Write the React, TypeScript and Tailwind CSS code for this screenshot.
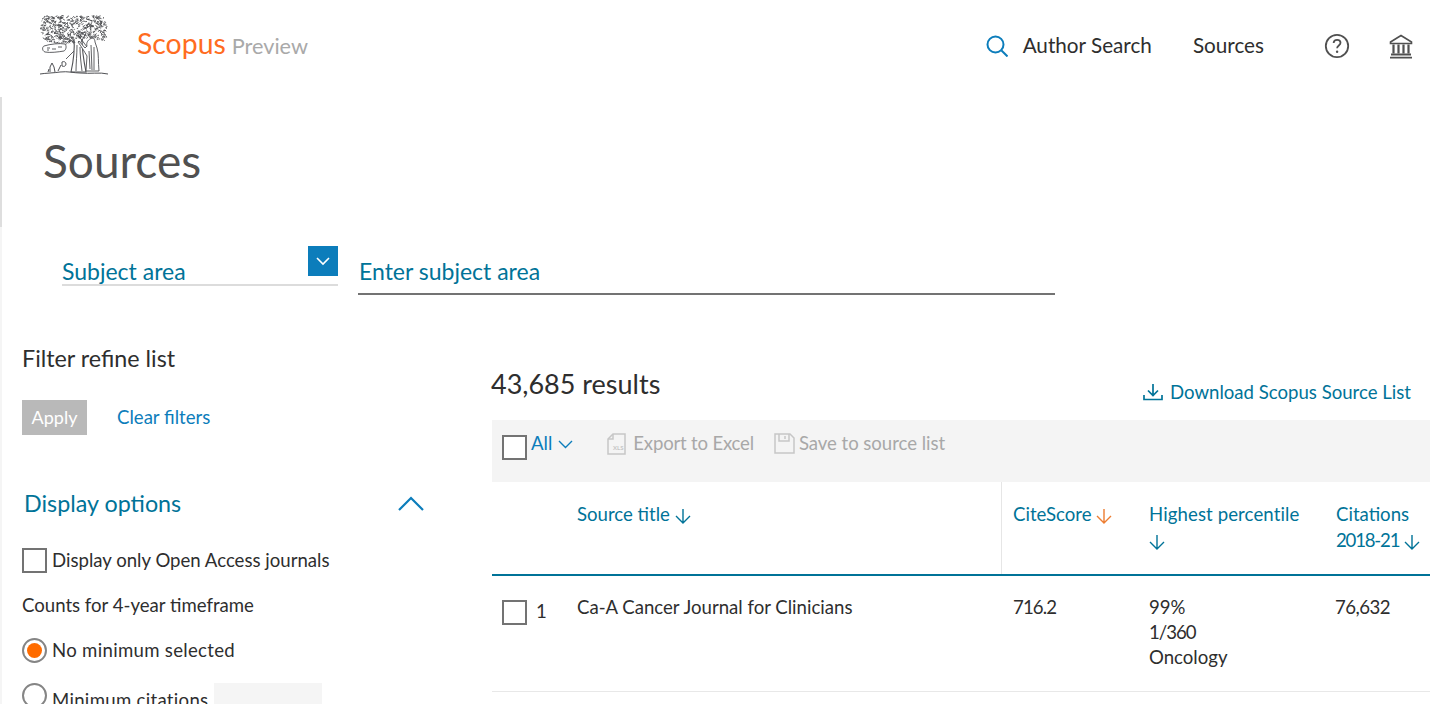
import React from "react";

const F = "font-['Lato','Noto_Sans',sans-serif]";

function Tree() {
  const leaves: string[] = [];
  let s = 11;
  const r = () => { s = (s * 16807) % 2147483647; return s / 2147483647; };
  for (let i = 0; i < 620; i++) {
    const x = r() * 68;
    const y = 1 + r() * 29;
    const nx = (x - 34) / 34;
    const ny = (y - 14) / 16;
    if (nx * nx * nx * nx + ny * ny * ny * ny > 0.85) continue;
    if (y > 23 && x > 40 && x < 58) continue;
    leaves.push(`M${x.toFixed(1)} ${y.toFixed(1)}q${(r() * 4 - 2).toFixed(1)} ${(r() * 4 - 2).toFixed(1)} ${(r() * 5 - 2.5).toFixed(1)} ${(r() * 3 - 1.5).toFixed(1)}`);
  }
  return (
    <svg width="68" height="60" viewBox="0 0 68 60" fill="none" className="block">
      <path d={leaves.join("")} stroke="#4f5054" strokeWidth="0.9" />
      <path d="M34 24c1 12-1 24-3 33h15c-2-10-4-22-4-33" fill="#fff" stroke="#4f5054" strokeWidth="1.1" />
      <path d="M37 30c0 10-1 18-1 26M40 32c0 8 1 16 2 24M34 36l-8 8M30 20l5 8M46 18l-5 9" stroke="#4f5054" strokeWidth="0.9" />
      <path d="M50 24c3-2 5 0 5 3l2 6c2 6 1 14 2 23H46l1-15c-3-5-6-10-9-14l1-1 6 7 2-2c-1-3 1-6 3-7z" fill="#fff" stroke="#4f5054" strokeWidth="0.9" />
      <path d="M51 30l1 25M54 32v23M49 36l1 18M47 32l-9-12" stroke="#4f5054" strokeWidth="0.9" />
      <path d="M4 31c6-2 16-3 21-2 2 2 1 6-1 7-6 1-14 2-19 1-3-1-3-5-1-6z" fill="#fff" stroke="#4f5054" strokeWidth="0.9" />
      <path d="M7 33h3M12 34h4M18 32h4M7 35h2" stroke="#4f5054" strokeWidth="0.9" />
      <path d="M0 59c6-1 14-1 20-2 8-1 14 1 20 1 10 1 20-1 28 1" stroke="#4f5054" strokeWidth="1" />
      <path d="M10 57v-5l2-4 2 4 1 5M8 57l1-3M18 56l3-6M22 47c2-1 4 0 4 2s-2 3-4 2z" stroke="#4f5054" strokeWidth="1" />
    </svg>
  );
}

const Down = ({ c = "#007398" }: { c?: string }) => (
  <svg width="16" height="16" viewBox="0 0 16 16" fill="none" stroke={c} strokeWidth="1.4" className="inline-block align-[-3px]">
    <path d="M8 1v14M1 8l7 7 7-7" />
  </svg>
);

const Check = ({ className = "" }: { className?: string }) => (
  <span className={`block w-[25px] h-[25px] border-2 border-[#737373] bg-white shrink-0 ${className}`} />
);

const Grid = "grid grid-cols-[85px_425px_136px_187px_105px]";

export default function App() {
  return (
    <div className={`w-[1430px] h-[704px] overflow-hidden bg-white text-[#2e2e2e] ${F}`}>
      <header className="h-[97px] flex items-start">
        <div className="ml-[40px] mt-[15px]"><Tree /></div>
        <div className="ml-[29px] mt-[24px] flex items-baseline gap-[6px]">
          <span className="text-[28.4px] leading-[38px] text-[#ff6c1f]">Scopus</span>
          <span className="text-[21.7px] leading-[38px] text-[#a9a9a9]">Preview</span>
        </div>
        <nav className="ml-auto mt-[32px] flex items-center h-[28px] text-[20.7px] text-[#2e2e2e]">
          <svg width="22" height="22" viewBox="0 0 22 22" fill="none" stroke="#0c7dbb" strokeWidth="2" className="mr-[15px]">
            <circle cx="9.5" cy="9.5" r="8" />
            <path d="M15.5 15.5l6 6" />
          </svg>
          <span>Author Search</span>
          <span className="ml-[41px]">Sources</span>
          <svg width="26" height="26" viewBox="0 0 26 26" fill="none" className="ml-[60px]">
            <circle cx="13" cy="13" r="11.2" stroke="#505050" strokeWidth="1.8" />
            <path d="M9.6 10c.2-2 1.6-3.2 3.5-3.2s3.4 1.2 3.4 3c0 2.6-3.4 2.8-3.4 5.4" stroke="#505050" strokeWidth="1.8" />
            <circle cx="13.1" cy="18.8" r="1.2" fill="#505050" />
          </svg>
          <svg width="24" height="25" viewBox="0 0 24 25" fill="none" stroke="#505050" className="ml-[39px] mr-[17px]">
            <path d="M1.5 8L12 1.5 22.5 8v1.5h-21z" strokeWidth="1.6" />
            <path d="M4.5 10.5v9M9.5 10.5v9M14.5 10.5v9M19.5 10.5v9" strokeWidth="2.2" />
            <path d="M2 20.5h20M1 23.7h22" strokeWidth="1.8" />
          </svg>
        </nav>
      </header>

      <div className="h-[130px] border-l-2 border-[#dedede]">
        <h1 className="ml-[41px] pt-[32px] text-[46px] leading-[64px] text-[#505050]">Sources</h1>
      </div>

      <main className="border-l-2 border-[#f5f5f5] h-[477px]">
        <div className="flex items-start pt-[19px] h-[104px]">
          <div className="relative ml-[60px] w-[276px] h-[40px] border-b-2 border-[#dcdcdc] text-[#007398] text-[23px] leading-[30px] pt-[10px]">
            Subject area
            <span className="absolute right-0 top-0 w-[30px] h-[30px] bg-[#0c7dbb] flex items-center justify-center">
              <svg width="14" height="9" viewBox="0 0 14 9" fill="none" stroke="#fff" strokeWidth="1.6"><path d="M1 1l6 6 6-6" /></svg>
            </span>
          </div>
          <div className="ml-[20px] w-[697px] h-[49px] border-b-2 border-[#737373] pl-[1px] pt-[10px] text-[23px] leading-[30px] text-[#007398]">
            Enter subject area
          </div>
        </div>

        <div className="flex items-start">
          <aside className="w-[490px] shrink-0 pl-[20px] pt-[11px]">
            <div className="text-[23.3px] leading-[32px] text-[#2e2e2e]">Filter refine list</div>
            <div className="flex items-center mt-[26px]">
              <span className="w-[65px] h-[35px] bg-[#b9b9b9] text-white text-[18px] flex items-center justify-center">Apply</span>
              <span className="ml-[30px] text-[18.6px] text-[#0c7dbb]">Clear filters</span>
            </div>
            <div className="flex items-center justify-between mt-[51px] ml-[2px] w-[400px] h-[34px] text-[#007398] text-[23.3px]">
              <span>Display options</span>
              <svg width="26" height="15" viewBox="0 0 26 15" fill="none" stroke="#0c7dbb" strokeWidth="2.2"><path d="M1 14L13 2l12 12" /></svg>
            </div>
            <label className="flex items-center gap-[5px] mt-[27px] text-[18.6px] leading-[26px]">
              <Check /> Display only Open Access journals
            </label>
            <div className="mt-[19px] text-[18.6px] leading-[26px]">Counts for 4-year timeframe</div>
            <div className="flex items-center gap-[5px] mt-[19px] text-[18.6px] leading-[26px] tracking-[0.3px]">
              <span className="w-[25px] h-[25px] rounded-full border-2 border-[#858585] flex items-center justify-center shrink-0">
                <span className="w-[15px] h-[15px] rounded-full bg-[#ff6c00]" />
              </span>
              No minimum selected
            </div>
            <div className="flex items-start gap-[5px] mt-[20px] text-[18.6px] tracking-[0.3px]">
              <span className="w-[25px] h-[25px] rounded-full border-2 border-[#858585] shrink-0" />
              <span className="mt-[4px] leading-[26px]">Minimum citations</span>
              <span className="w-[108px] h-[40px] ml-[1px] bg-[#f5f5f5]" />
            </div>
          </aside>

          <section className="flex-1 min-w-0 mt-[30px]">
            <div className="h-[60px] flex items-start">
              <span className="text-[27px] leading-[36px] mt-[5px] -ml-[1px]">43,685 results</span>
              <span className="ml-auto mt-[17px] flex items-center gap-[7px] text-[18.6px] leading-[28px] text-[#007398] pr-[19px]">
                <svg width="20" height="18" viewBox="0 0 20 18" fill="none" stroke="#007398" strokeWidth="1.7">
                  <path d="M10 1v11M5 7.5l5 5 5-5M1 12v4.5h18V12" />
                </svg>
                Download Scopus Source List
              </span>
            </div>
            <div className="h-[62px] bg-[#f4f4f4] flex items-start -mt-[1px] text-[18.6px] leading-[26px]">
              <Check className="ml-[10px] mt-[15px]" />
              <span className="ml-[4px] mt-[10px] text-[#0c7dbb] flex items-center gap-[6px]">
                All
                <svg width="15" height="9" viewBox="0 0 15 9" fill="none" stroke="#0c7dbb" strokeWidth="1.4" className="mt-[3px]"><path d="M1 1l6.5 6.5L14 1" /></svg>
              </span>
              <svg width="19" height="22" viewBox="0 0 19 22" fill="none" stroke="#c6c6c6" strokeWidth="1.5" className="ml-[34px] mt-[13px]">
                <path d="M6 1h12v20H1V6z" /><path d="M6 1v5H1" />
                <text x="6" y="17" fontSize="6" fill="#c6c6c6" stroke="none" fontWeight="700">XLS</text>
              </svg>
              <span className="ml-[7px] mt-[10px] text-[#a8a8a8] tracking-[-0.2px]">Export to Excel</span>
              <svg width="21" height="21" viewBox="0 0 21 21" fill="none" stroke="#c6c6c6" strokeWidth="1.5" className="ml-[20px] mt-[13px]">
                <path d="M1 1h15l4 4v15H1z" /><path d="M5 1v7h10V1M11 3v3" />
              </svg>
              <span className="ml-[4px] mt-[10px] text-[#a8a8a8] tracking-[-0.05px]">Save to source list</span>
            </div>
            <div className={`${Grid} h-[94px] border-b-2 border-[#007398] text-[#007398] text-[18.6px] leading-[26px]`}>
              <div />
              <div className="border-r border-[#e6e6e6] pt-[19px]">Source title <Down /></div>
              <div className="pt-[19px] pl-[11px]">CiteScore <Down c="#ed7d31" /></div>
              <div className="pt-[19px] pl-[11px] tracking-[0.1px]">Highest percentile<br /><Down /></div>
              <div className="pt-[19px] pl-[11px] whitespace-nowrap">Citations<br /><span className="tracking-[-1.2px]">2018-21</span> <Down /></div>
            </div>
            <div className={`${Grid} h-[116px] border-b border-[#e8e8e8] text-[18.6px] leading-[25px]`}>
              <div className="flex items-start pt-[24px] pl-[10px]">
                <Check />
                <span className="ml-[9px] mt-[-1px]">1</span>
              </div>
              <div className="pt-[19px]">Ca-A Cancer Journal for Clinicians</div>
              <div className="pt-[19px] pl-[11px] tracking-[-0.9px]">716.2</div>
              <div className="pt-[19px] pl-[11px]">99%<br /><span className="tracking-[-1px]">1/360</span><br />Oncology</div>
              <div className="pt-[19px] pl-[10px] tracking-[-0.5px]">76,632</div>
            </div>
          </section>
        </div>
      </main>
    </div>
  );
}
